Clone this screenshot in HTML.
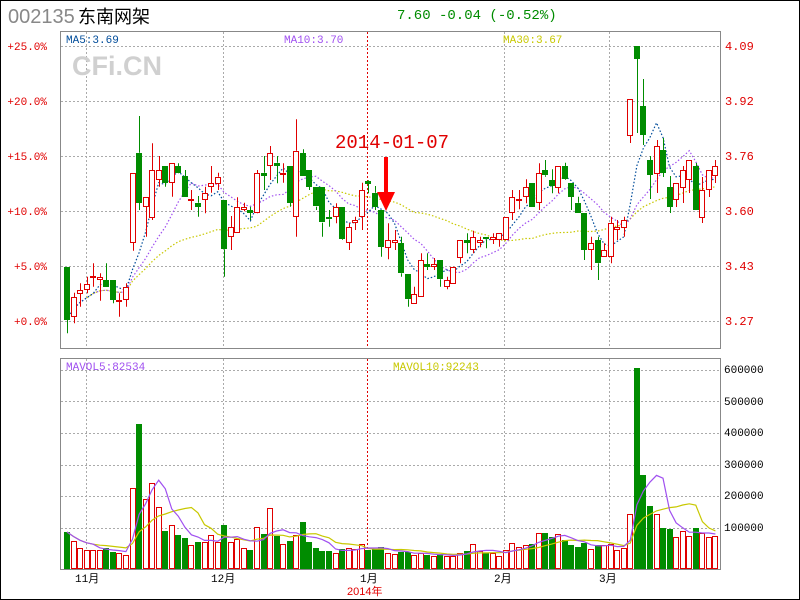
<!DOCTYPE html>
<html><head><meta charset="utf-8"><style>
html,body{margin:0;padding:0;background:#fff;}
body{width:800px;height:600px;overflow:hidden;position:relative;}
svg{position:absolute;left:0;top:0;}
text{font-family:"Liberation Mono","DejaVu Sans Mono",monospace;}
</style></head><body>
<svg id="s" width="800" height="600" xmlns="http://www.w3.org/2000/svg">
<rect x="0.5" y="0.5" width="799" height="599" fill="#fff" stroke="#000" stroke-width="1"/>
<rect x="60.5" y="31.5" width="660" height="317" fill="none" stroke="#888"/>
<rect x="60.5" y="358.5" width="660" height="211" fill="none" stroke="#888"/>
<g id="grid" stroke="#aaa" stroke-dasharray="2 2" stroke-width="1"></g>
<text x="72" y="75" font-family="Liberation Sans" font-weight="bold" font-size="27" fill="#d0d0d0" style="font-family:'Liberation Sans',sans-serif">CFi.CN</text>
<g id="chart"></g>
<text x="8" y="23" font-size="20" fill="#888" style="font-family:'Liberation Sans',sans-serif">002135</text>
<text x="78" y="23" font-size="18" fill="#000" style="font-family:'Liberation Sans','Noto Sans CJK SC',sans-serif">东南网架</text>
<text x="397" y="19" font-size="14" fill="#008c00">7.60 -0.04 (-0.52%)</text>
<text x="66" y="43" font-size="11" fill="#004c9a">MA5:3.69</text>
<text x="284" y="43" font-size="11" fill="#a050f0">MA10:3.70</text>
<text x="503" y="43" font-size="11" fill="#c8c800">MA30:3.67</text>
<text x="66" y="370" font-size="11" fill="#a050f0">MAVOL5:82534</text>
<text x="393" y="370" font-size="11" fill="#c8c800">MAVOL10:92243</text>
<text x="335" y="148" font-size="19" fill="#e00000">2014-01-07</text>
<g font-size="11" fill="#e00000" text-anchor="end">
<text x="47" y="50">+25.0%</text><text x="47" y="105">+20.0%</text><text x="47" y="160">+15.0%</text><text x="47" y="215">+10.0%</text><text x="47" y="270">+5.0%</text><text x="47" y="325">+0.0%</text>
</g>
<g font-size="12" fill="#e00000">
<text x="725" y="50">4.09</text><text x="725" y="105">3.92</text><text x="725" y="160">3.76</text><text x="725" y="215">3.60</text><text x="725" y="270">3.43</text><text x="725" y="325">3.27</text>
</g>
<g font-size="11" fill="#000" style="font-family:'Liberation Sans',sans-serif">
<text x="724" y="373">600000</text><text x="724" y="405">500000</text><text x="724" y="436">400000</text><text x="724" y="468">300000</text><text x="724" y="499">200000</text><text x="724" y="531">100000</text>
</g>
<g font-size="11" fill="#000" style="font-family:'Liberation Sans','Noto Sans CJK SC',sans-serif">
<text x="75" y="582">11月</text><text x="211" y="582">12月</text><text x="360" y="582">1月</text><text x="494" y="582">2月</text><text x="599" y="582">3月</text>
</g>
<text x="347" y="595" font-size="11" fill="#e00000" style="font-family:'Liberation Sans','Noto Sans CJK SC',sans-serif">2014年</text>
<rect x="384" y="157" width="4" height="36" fill="#f00"/>
<polygon points="377,192 395,192 386,211" fill="#f00"/>
</svg>
<script>
var C=[
['g',266.7,320,266.7,333.3],['r',297.3,316,292.7,323.3],['r',290,293.3,283.3,306.7],['r',284,289.3,276.7,293.3],['r',276,276.7,263.3,286.7],
['r',277.3,279.3,273.3,300.7],['g',280,286.7,263.3,286.7],['g',280,300,280,303.3],['r',300,300.5,293.3,316.7],['r',287.3,299.3,283.3,306.7],
['r',173.3,242,173.3,250.7],['g',152.7,202.7,116,210],['r',197.3,206.7,197.3,236.7],['r',170,216.7,143.3,220],['r',170,179.3,156,186.7],
['g',166,182.7,166,186.7],['r',163.3,182,163.3,196.7],['g',166,172.7,163.3,173.3],['g',176,196.7,170,196.7],['r',199,199.5,190,210],
['g',202.7,206.7,196,216.7],['r',193.3,199.3,186.7,213.3],['r',183.3,186.7,166,192.7],['r',176.7,182.7,172.7,190],['g',200,249.3,200,276.7],
['r',227.3,236,216,250],['r',207.3,232,197.3,232.7],['r',207.3,209.3,202.7,211.3],['g',210,212.7,206.7,220],['r',173.3,212,170,213.3],
['g',172.7,175.3,156,190],['r',153.3,165.3,146,180],['g',162.7,165.3,156,183.3],['r',172.7,173.3,163.3,182.7],['g',166,202.7,166,206.7],
['r',150.7,216,119.3,236.7],['g',153.3,176,149.3,176],['g',170,186.7,170,190],['g',187.3,206.7,187.3,210],['g',187.3,222.7,187.3,236.7],
['g',217.3,219.3,210,226.7],['r',207.3,216.7,203.3,223.3],['g',207.3,239.3,207.3,240],['r',227.3,242,223.3,250],['r',220,222,216.7,230],
['r',190,216,182.7,230],['g',180.7,183.3,180,193.3],['g',192.7,206.7,186,210],['g',210,246.7,210,256.7],['r',240,246.7,223.3,259.3],
['r',240,242,230,250],['g',243.3,273.3,236.7,276.7],['g',274,299.3,274,306.7],['r',294,303.3,286.7,303.3],['r',260,296,253.3,296],
['g',264,266.7,253.3,270],['r',264,266,258,270],['g',260,279.3,260,286.7],['r',280,286,276.7,289.3],['r',267.3,283.3,266.7,284],
['r',240,256.7,240,263.3],['g',240,242.7,233.3,253.3],['r',237.3,249.3,230.7,253.3],['r',240,242,236.7,247.3],['g',237.3,239.3,237.3,248.3],
['r',237.3,239.3,233.3,244],['r',233.3,239.3,233.3,246.7],['r',217.3,239.3,217.3,240],['r',197.3,212,190,220],['r',199.3,200,190,209.3],
['r',187.3,196,179.3,203.3],['g',182.7,206.7,182.7,206.7],['r',173.3,202,163.3,210],['g',170,175.3,160,176.7],['g',180,186,169.3,193.3],
['r',166,186.7,166,193.3],['g',166,179.3,162.7,180],['g',182.7,196.7,182.7,210],['g',202.7,212.7,196.7,212.7],['g',212.7,250,212.7,260],
['r',243.3,249.3,236.7,270],['g',240,263.3,236.7,280],['r',250,256,243.3,256.7],['r',223.3,256,216.7,263.3],['r',227.3,229.3,220,240],
['r',220,226.7,216.7,236.7],['r',99,135,99,143],['g',46,59,46,133],['g',106,135,79,145],['g',160,175,156,199],
['r',146,173,140,193],['g',150,173,138,177],['g',187,207,176,213],['r',183,199,183,207],['r',170,187,166,203],
['r',160,179,160,193],['g',166,210,163,210],['r',190,217,177,223],['r',170,189,170,197],['r',166,175,160,183]];
var V=[532,541,548,550,550,550,548,552,553,555,488,424,499,483,507,531,525,535,538,545,542,542,535,542,525,542,539,548,550,527,534,508,536,544,541,535,522,542,548,551,551,553,549,548,549,544,550,549,547,553,
554,552,552,555,553,555,556,554,556,556,553,551,544,551,553,553,556,550,543,547,545,544,533,533,537,534,540,545,547,543,549,545,545,544,550,548,514,368,475,506,514,528,529,537,531,536,528,533,537,536];
var ns="http://www.w3.org/2000/svg";
function el(p,t,a){var e=document.createElementNS(ns,t);for(var k in a)e.setAttribute(k,a[k]);p.appendChild(e);return e;}
var g=document.getElementById('chart'),gr=document.getElementById('grid');
[46,101,156,211,266,321].forEach(function(y){el(gr,'line',{x1:61,x2:720,y1:y+.5,y2:y+.5});});
[370,401,433,465,496,528].forEach(function(y){el(gr,'line',{x1:61,x2:720,y1:y+.5,y2:y+.5});});
[86,223,504,609].forEach(function(x){el(gr,'line',{x1:x+.5,x2:x+.5,y1:32,y2:348});el(gr,'line',{x1:x+.5,x2:x+.5,y1:359,y2:569});});
el(gr,'line',{x1:367.5,x2:367.5,y1:32,y2:348,stroke:'#e00000'});el(gr,'line',{x1:367.5,x2:367.5,y1:359,y2:569,stroke:'#e00000'});
var R='#e00000',G='#008c00';
function X(i){return 64+i*6.55;}
var closes=C.map(function(c){return c[0]=='r'?c[1]:c[2];});
function ma(a,n){return a.map(function(v,i){var s=0,k=0;for(var j=Math.max(0,i-n+1);j<=i;j++){s+=a[j];k++;}return s/k;});}
function line(a,col,start,dash){var p=[];for(var i=start;i<a.length;i++)p.push((X(i)+3).toFixed(1)+','+a[i].toFixed(1));el(g,'polyline',{points:p.join(' '),fill:'none',stroke:col,'stroke-width':1.2,'stroke-dasharray':dash||'none'});}
line(ma(closes,30),'#c8c800',3,'1.5 2');
line(ma(closes,10),'#a050f0',0,'1.5 2');
line(ma(closes,5),'#004c9a',0,'1.5 2');
C.forEach(function(c,i){var x=X(i),col=c[0]=='r'?R:G;var cx=Math.round(x+3)+.5;
el(g,'line',{x1:cx,x2:cx,y1:c[3],y2:c[1],stroke:col});el(g,'line',{x1:cx,x2:cx,y1:c[2],y2:c[4],stroke:col});
var h=Math.max(1,c[2]-c[1]);
if(c[0]=='r')el(g,'rect',{x:Math.round(x)+.5,y:Math.round(c[1])+.5,width:5,height:Math.max(1,Math.round(h)),fill:'#fff',stroke:R});
else el(g,'rect',{x:Math.round(x),y:Math.round(c[1]),width:6,height:Math.max(2,Math.round(h)),fill:G});});
V.forEach(function(v,i){var x=X(i),c=C[i][0];
if(c=='r')el(g,'rect',{x:Math.round(x)+.5,y:v+.5,width:5,height:568-v,fill:'#fff',stroke:R});
else el(g,'rect',{x:Math.round(x),y:v,width:6,height:569-v,fill:G});});
line(ma(V,10),'#c8c800',0);line(ma(V,5),'#a050f0',0);
</script>
</body></html>
